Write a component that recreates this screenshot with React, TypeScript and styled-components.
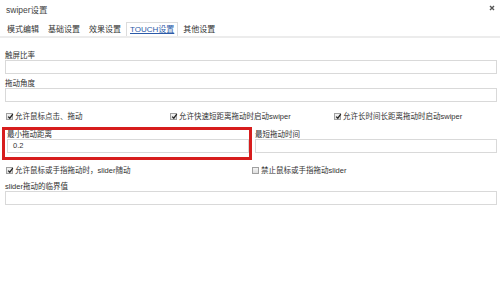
import React from "react";
import styled, { createGlobalStyle } from "styled-components";

const Global = createGlobalStyle`
  html, body { margin: 0; padding: 0; background: #fff; }
  body {
    font-family: "Liberation Sans", "Noto Sans CJK SC", sans-serif;
    color: #333;
  }
`;

const Page = styled.div`
  width: 500px;
  height: 290px;
  background: #fff;
  overflow: hidden;
`;

const Header = styled.div`
  height: 20px;
  display: flex;
  align-items: center;
  justify-content: space-between;
  padding: 0 3px 0 6px;
  box-sizing: border-box;
`;

const Title = styled.span`
  font-size: 8.5px;
  line-height: 10px;
  color: #444;
`;

const Close = styled.span`
  width: 8px;
  height: 8px;
  display: flex;
  align-items: center;
  justify-content: center;
  margin-top: -4px;
  margin-right: 1px;
`;

const TabBar = styled.div`
  margin-top: 2px;
  height: 14px;
  display: flex;
  align-items: stretch;
  padding-left: 3px;
  border-bottom: 2px solid #ececec;
`;

const Tab = styled.div<{ $active?: boolean }>`
  padding: 0 3px;
  margin-right: 1px;
  font-size: 8px;
  white-space: nowrap;
  box-sizing: border-box;
  border: 1px solid ${(p) => (p.$active ? "#dcdcdc" : "transparent")};
  border-bottom: none;
  background: #fff;
  color: ${(p) => (p.$active ? "#2b5aa8" : "#333")};
  text-decoration: ${(p) => (p.$active ? "underline" : "none")};
  line-height: 13px;
`;

const Form = styled.div`
  padding: 0 3px 0 5px;
  display: flex;
  flex-direction: column;
`;

const Field = styled.div<{ $mt: number }>`
  margin-top: ${(p) => p.$mt}px;
  display: flex;
  flex-direction: column;
`;

const Label = styled.div`
  font-size: 7.5px;
  line-height: 9px;
  height: 9px;
  white-space: nowrap;
  color: #333;
`;

const Input = styled.div`
  height: 14px;
  box-sizing: border-box;
  border: 1px solid #d9d9d9;
  background: #fff;
  font-size: 7.5px;
  line-height: 12px;
  padding-left: 5px;
  color: #333;
`;

const CheckRow = styled.div<{ $cols: number; $mt: number }>`
  margin-top: ${(p) => p.$mt}px;
  display: grid;
  grid-template-columns: repeat(${(p) => p.$cols}, 1fr);
  height: 9px;
`;

const CheckItem = styled.label`
  display: flex;
  align-items: center;
  padding-left: 1px;
  font-size: 7.5px;
  line-height: 9px;
  white-space: nowrap;
  color: #333;
`;

const Box = styled.span`
  width: 7px;
  height: 7px;
  box-sizing: border-box;
  border: 1px solid #a0a0a0;
  background: linear-gradient(#f4f4f4, #dedede);
  margin-right: 2px;
  position: relative;
  flex: none;
  display: flex;
  align-items: center;
  justify-content: center;
`;

const PairRow = styled.div`
  margin-top: 9px;
  display: grid;
  grid-template-columns: 244px 1fr;
  column-gap: 6px;
`;

const Cell = styled.div<{ $marked?: boolean }>`
  display: flex;
  flex-direction: column;
  padding: 1px 0 4px ${(p) => (p.$marked ? "2px" : "0")};
  outline: ${(p) => (p.$marked ? "3px solid #d71d1d" : "none")};
  box-sizing: border-box;
`;

const CellLabel = styled(Label)`
  height: 8px;
  line-height: 8px;
`;

const Check = ({ checked, children }: { checked: boolean; children: React.ReactNode }) => (
  <CheckItem>
    <Box>
      {checked && (
        <svg width="7" height="7" viewBox="0 0 7 7" style={{ position: "absolute", left: 0, top: -1 }}>
          <path d="M1.2 3.6 L2.8 5.2 L5.8 1.2" fill="none" stroke="#222" strokeWidth="1.3" />
        </svg>
      )}
    </Box>
    {children}
  </CheckItem>
);

export default function App() {
  return (
    <>
      <Global />
      <Page>
        <Header>
          <Title>swiper设置</Title>
          <Close>
            <svg width="6" height="6" viewBox="0 0 6 6">
              <path d="M1 1 L5 5 M5 1 L1 5" stroke="#555" strokeWidth="1.4" />
            </svg>
          </Close>
        </Header>
        <TabBar>
          <Tab>模式编辑</Tab>
          <Tab>基础设置</Tab>
          <Tab>效果设置</Tab>
          <Tab $active>TOUCH设置</Tab>
          <Tab>其他设置</Tab>
        </TabBar>
        <Form>
          <Field $mt={13}>
            <Label>触屏比率</Label>
            <Input />
          </Field>
          <Field $mt={5}>
            <Label>拖动角度</Label>
            <Input />
          </Field>
          <CheckRow $cols={3} $mt={10}>
            <Check checked>允许鼠标点击、拖动</Check>
            <Check checked>允许快速短距离拖动时启动swiper</Check>
            <Check checked>允许长时间长距离拖动时启动swiper</Check>
          </CheckRow>
          <PairRow>
            <Cell $marked>
              <CellLabel>最小拖动距离</CellLabel>
              <Input>0.2</Input>
            </Cell>
            <Cell>
              <CellLabel>最短拖动时间</CellLabel>
              <Input />
            </Cell>
          </PairRow>
          <CheckRow $cols={2} $mt={9}>
            <Check checked>允许鼠标或手指拖动时，slider随动</Check>
            <Check checked={false}>禁止鼠标或手指拖动slider</Check>
          </CheckRow>
          <Field $mt={7}>
            <Label>slider拖动的临界值</Label>
            <Input />
          </Field>
        </Form>
      </Page>
    </>
  );
}
